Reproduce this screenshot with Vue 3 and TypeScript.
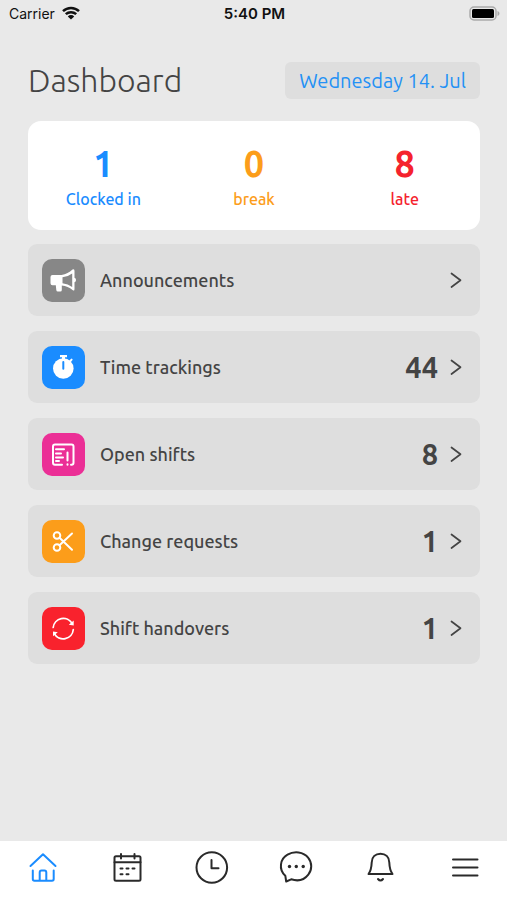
<script setup lang="ts">
type IconName = 'announce' | 'timer' | 'shifts' | 'scissors' | 'handover'

interface Stat {
  value: number
  label: string
  tone: string
}

interface Entry {
  label: string
  icon: IconName
  count?: number
}

const stats: Stat[] = [
  { value: 1, label: 'Clocked in', tone: 'blue' },
  { value: 0, label: 'break', tone: 'orange' },
  { value: 8, label: 'late', tone: 'red' },
]

const entries: Entry[] = [
  { label: 'Announcements', icon: 'announce' },
  { label: 'Time trackings', icon: 'timer', count: 44 },
  { label: 'Open shifts', icon: 'shifts', count: 8 },
  { label: 'Change requests', icon: 'scissors', count: 1 },
  { label: 'Shift handovers', icon: 'handover', count: 1 },
]
</script>

<template>
  <div class="app">
    <div class="status">
      <div class="carrier">
        <span>Carrier</span>
        <svg class="wifi" viewBox="0 0 18 14" aria-hidden="true">
          <path d="M1 5.2a11.6 11.6 0 0 1 16 0" />
          <path d="M3.8 8.2a7.6 7.6 0 0 1 10.4 0" />
          <path class="solid" d="M9 13.6L5.8 10.4a4.6 4.6 0 0 1 6.4 0z" />
        </svg>
      </div>
      <span class="time">5:40 PM</span>
      <svg class="battery" viewBox="0 0 31 15" aria-hidden="true">
        <rect class="shell" x="1" y="1" width="26" height="13" rx="4" />
        <rect x="3" y="3" width="22" height="9" rx="1.5" />
        <path class="tip" d="M28.5 5c2.6.8 2.6 4.2 0 5z" />
      </svg>
    </div>

    <main class="content">
      <header class="heading">
        <h1>Dashboard</h1>
        <button type="button" class="date">Wednesday 14. Jul</button>
      </header>

      <section class="stats">
        <div v-for="s in stats" :key="s.label" class="stat" :class="s.tone">
          <strong>{{ s.value }}</strong>
          <span>{{ s.label }}</span>
        </div>
      </section>

      <div class="entries">
        <a v-for="e in entries" :key="e.label" href="#" class="entry">
          <span class="tile" :class="e.icon">
            <svg v-if="e.icon === 'announce'" viewBox="0 0 43 43" aria-hidden="true">
              <path class="fill" fill-rule="evenodd" d="M10.5 16H19.5Q26 15 30.5 10.6Q32.5 9.5 32.5 12V18.7Q34 19 34 21T32.5 23.3V30Q32.5 32.5 30.5 31Q26 27 19.8 26.5V31Q19.8 32.5 18.3 32.5H15.8Q14.5 32.5 14.3 31L13.8 26.3H10.5Q8.5 26.3 8.5 24.3V18Q8.5 16 10.5 16zM20.5 18.3V24.3Q26 24.7 30.2 28V14.5Q26 17.8 20.5 18.3z" />
            </svg>
            <svg v-else-if="e.icon === 'timer'" viewBox="0 0 43 43" aria-hidden="true">
              <circle class="fill" cx="21.3" cy="22.5" r="10.3" />
              <path class="fill" d="M18 9H25V11.2H23V13H20V11.2H18z" />
              <path d="M28 15.2L29.6 13.6" />
              <path class="hand" d="M21.3 16V22.8" />
            </svg>
            <svg v-else-if="e.icon === 'shifts'" viewBox="0 0 43 43" aria-hidden="true">
              <path d="M20 31.7H13Q11 31.7 11 29.7V13.5Q11 11.5 13 11.5H29.5Q31.5 11.5 31.5 13.5V29.7Q31.5 31.7 29.5 31.7H29" />
              <path d="M14 16.3H22M14 20.5H19M14 24.5H21M14 28H17M25.5 19.5V27.5M25.5 31.2V31.7" />
            </svg>
            <svg v-else-if="e.icon === 'scissors'" viewBox="0 0 43 43" aria-hidden="true">
              <circle cx="15" cy="15.5" r="3.3" />
              <circle cx="15" cy="27.5" r="3.3" />
              <path d="M17.5 17.8L30 29.8M17.5 25.2L30 13.5" />
            </svg>
            <svg v-else class="thin" viewBox="0 0 43 43" aria-hidden="true">
              <path d="M11.2 20.5A10.2 10.2 0 0 1 30.2 16.5M31.3 22.5A10.2 10.2 0 0 1 12.2 26.5" />
              <path class="fill" d="M31.7 13.6V18.4L26.8 17.7zM11 29.2V24.4L15.8 25.2z" />
            </svg>
          </span>
          <span class="label">{{ e.label }}</span>
          <strong v-if="e.count !== undefined" class="count">{{ e.count }}</strong>
          <svg class="chevron" viewBox="0 0 12 18" aria-hidden="true">
            <path d="M1.5 2.5L10.5 9.3L1.5 16" />
          </svg>
        </a>
      </div>
    </main>

    <nav class="tabs">
      <a href="#" class="tab active" aria-label="Home">
        <svg viewBox="0 0 36 36" aria-hidden="true">
          <path d="M6.500 17L19 5.300L31.500 17M8.800 21.500V30Q8.800 31.700 10.500 31.700H28Q29.700 31.700 29.700 30V21.500M15.700 31.700V23.500Q15.700 21.500 17.500 21.500H20.500Q22.300 21.500 22.300 23.500V31.700" />
        </svg>
      </a>
      <a href="#" class="tab" aria-label="Calendar">
        <svg viewBox="0 0 36 36" aria-hidden="true">
          <rect x="5.5" y="7.3" width="26" height="24.4" rx="1.5" />
          <path d="M5.5 13.2H31.5M12 5V9.5M25.5 5V9.5" />
          <path d="M11.5 19.5H13.5M17.5 19.5H19.5M23.5 19.5H25.5M11.5 25.3H13.5M17.5 25.3H19.5" />
        </svg>
      </a>
      <a href="#" class="tab" aria-label="Time">
        <svg viewBox="0 0 36 36" aria-hidden="true">
          <circle cx="18.8" cy="18.5" r="15.3" />
          <path d="M18.5 11V19.2H25.5" />
        </svg>
      </a>
      <a href="#" class="tab" aria-label="Messages">
        <svg viewBox="0 0 36 36" aria-hidden="true">
          <path d="M8.2 32.5L7.3 26.7C.2 20.2 2.2 9.8 9.5 5.7C16 1.7 25.5 2.5 30.3 8.8C34.2 13.6 34.2 20.8 30.3 25.6C26.3 30.8 19.8 32.5 13.2 30.3Z" />
          <g class="dots">
            <circle cx="11.5" cy="17.5" r="1.7" />
            <circle cx="18.3" cy="17.5" r="1.7" />
            <circle cx="25.2" cy="17.5" r="1.7" />
          </g>
        </svg>
      </a>
      <a href="#" class="tab" aria-label="Notifications">
        <svg viewBox="0 0 36 36" aria-hidden="true">
          <path d="M6.5 25H30.5C27.8 21.5 27.5 18.5 27.3 13.5C27.2 8 23.5 4.8 18.5 4.8S9.8 8 9.7 13.5C9.5 18.5 9.2 21.5 6.5 25Z" />
          <path d="M16 30Q18.5 33 21 30" />
        </svg>
      </a>
      <a href="#" class="tab" aria-label="Menu">
        <svg viewBox="0 0 36 36" aria-hidden="true">
          <path d="M6 10.5H30.5M6 18.5H30.5M6 26.5H30.5" />
        </svg>
      </a>
    </nav>
  </div>
</template>

<style>
body {
  background: #e9e9e9;
}
</style>

<style scoped>
.app {
  display: flex;
  flex-direction: column;
  min-height: 100vh;
  background: #e9e9e9;
  color: #444;
  font-family: "Ubuntu", "Noto Sans", sans-serif;
}

svg {
  display: block;
  fill: none;
  stroke: currentColor;
  stroke-width: 2;
  stroke-linecap: round;
  stroke-linejoin: round;
}

a {
  color: inherit;
  text-decoration: none;
}

.status {
  display: grid;
  grid-template-columns: 1fr auto 1fr;
  align-items: center;
  height: 26px;
  padding: 0 7px 0 9px;
  color: #111;
  font-family: Inter, sans-serif;
  font-size: 14px;
}

.carrier {
  display: flex;
  align-items: center;
  gap: 7px;
}

.wifi {
  width: 18px;
  height: 14px;
  stroke-width: 2.5;
  stroke-linecap: butt;
}

.wifi .solid {
  fill: currentColor;
  stroke: none;
}

.time {
  font-weight: 600;
  font-size: 15px;
}

.battery {
  width: 31px;
  height: 15px;
  justify-self: end;
  fill: #000;
  stroke: none;
}

.battery .shell {
  fill: none;
  stroke: #aaa;
  stroke-width: 1.5;
}

.battery .tip {
  fill: #aaa;
}

.content {
  flex: 1;
  padding: 36px 27px 20px 28px;
}

.heading {
  display: flex;
  justify-content: space-between;
  align-items: center;
  margin-bottom: 22px;
}

h1 {
  margin: 0;
  font-size: 32px;
  line-height: 37px;
  font-weight: 300;
}

.date {
  height: 37px;
  padding: 0 14px;
  border: 0;
  border-radius: 6px;
  background: #dedede;
  color: #2491f5;
  font: inherit;
  font-size: 20px;
  white-space: nowrap;
}

.stats {
  display: grid;
  grid-template-columns: repeat(3, 1fr);
  margin-bottom: 14px;
  padding: 21px 0 19px;
  border-radius: 13px;
  background: #fff;
}

.stat {
  display: flex;
  flex-direction: column;
  align-items: center;
  gap: 1px;
}

.stat strong {
  font-size: 36px;
  line-height: 44px;
}

.stat span {
  font-size: 16px;
  line-height: 24px;
  font-weight: 500;
}

.blue {
  color: #1a8cff;
}

.orange {
  color: #fc9d1a;
}

.red {
  color: #f5222d;
}

.entries {
  display: flex;
  flex-direction: column;
  gap: 15px;
}

.entry {
  display: flex;
  align-items: center;
  height: 72px;
  padding: 0 18px 0 14px;
  border-radius: 9px;
  background: #dedede;
}

.tile {
  width: 43px;
  height: 43px;
  margin-right: 15px;
  border-radius: 10px;
  color: #fff;
}

.tile .fill {
  fill: currentColor;
  stroke: none;
}

.tile .hand {
  stroke: #1a8cff;
}

.tile .thin {
  stroke-width: 1.7;
}

.announce {
  background: #878787;
}

.timer {
  background: #1a8cff;
}

.shifts {
  background: #eb2f96;
}

.scissors {
  background: #fc9d1a;
}

.handover {
  background: #f9222d;
}

.label {
  flex: 1;
  font-size: 18px;
  font-weight: 500;
}

.count {
  font-size: 29px;
  line-height: 36px;
}

.chevron {
  width: 12px;
  height: 18px;
  margin-left: 12px;
  stroke-width: 1.7;
}

.tabs {
  display: grid;
  grid-template-columns: repeat(6, 1fr);
  justify-items: center;
  padding: 8px 0 15px;
  background: #fff;
  color: #2a2a2a;
}

.tab svg {
  width: 36px;
  height: 36px;
}

.tab.active {
  color: #1a8cff;
}

.tab .dots {
  fill: currentColor;
  stroke: none;
}
</style>
